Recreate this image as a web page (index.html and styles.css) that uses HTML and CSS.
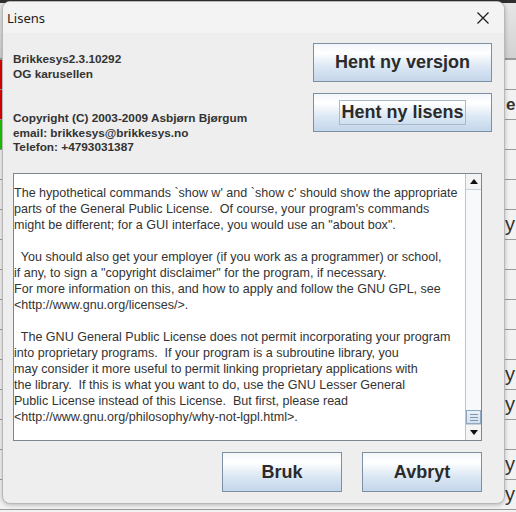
FILE: index.html
```html
<!DOCTYPE html>
<html lang="no">
<head>
    <meta charset="UTF-8">
    <title>Lisens</title>
    <link rel="stylesheet" href="styles.css">
</head>
<body>
    <div class="desk">
        <div class="backdrop">
            <div class="topbar"></div>
            <div class="toolbar"><span class="tool-text">em</span></div>
            <div class="row red"><span></span></div>
            <div class="row red"><span></span></div>
            <div class="row green"><span></span></div>
            <div class="row"><span></span></div>
            <div class="row"><span></span></div>
            <div class="row"><span>y</span></div>
            <div class="row"><span></span></div>
            <div class="row"><span></span></div>
            <div class="row"><span></span></div>
            <div class="row"><span></span></div>
            <div class="row"><span>y</span></div>
            <div class="row"><span>y</span></div>
            <div class="row"><span></span></div>
            <div class="row"><span>y</span></div>
            <div class="row"><span>y</span></div>
        </div>

        <div class="dialog">
            <div class="titlebar">
                <span class="title">Lisens</span>
                <svg class="close" width="12" height="12" viewBox="0 0 12 12">
                    <path d="M0.5 0.5 L11.5 11.5 M11.5 0.5 L0.5 11.5" stroke="#1a1a1a" stroke-width="1.2" fill="none"/>
                </svg>
            </div>

            <div class="content">
                <div class="top">
                    <div class="info">
                        <p>Brikkesys2.3.10292<br>OG karusellen</p>
                        <p>Copyright (C) 2003-2009 Asbjørn Bjørgum<br>email: brikkesys@brikkesys.no<br>Telefon: +4793031387</p>
                    </div>
                    <div class="actions">
                        <button class="jbtn big">Hent ny versjon</button>
                        <button class="jbtn big"><span class="focus">Hent ny lisens</span></button>
                    </div>
                </div>

                <div class="licence">
                    <div class="text">The hypothetical commands `show w' and `show c' should show the appropriate
parts of the General Public License.  Of course, your program's commands
might be different; for a GUI interface, you would use an "about box".

  You should also get your employer (if you work as a programmer) or school,
if any, to sign a "copyright disclaimer" for the program, if necessary.
For more information on this, and how to apply and follow the GNU GPL, see
&lt;http://www.gnu.org/licenses/&gt;.

  The GNU General Public License does not permit incorporating your program
into proprietary programs.  If your program is a subroutine library, you
may consider it more useful to permit linking proprietary applications with
the library.  If this is what you want to do, use the GNU Lesser General
Public License instead of this License.  But first, please read
&lt;http://www.gnu.org/philosophy/why-not-lgpl.html&gt;.</div>
                    <div class="scrollbar">
                        <div class="arrow"><svg width="8" height="5" viewBox="0 0 8 5"><path d="M4 0 L8 5 L0 5 Z" fill="#111"/></svg></div>
                        <div class="track"></div>
                        <div class="thumb"><i></i><i></i><i></i></div>
                        <div class="arrow"><svg width="8" height="5" viewBox="0 0 8 5"><path d="M0 0 L8 0 L4 5 Z" fill="#111"/></svg></div>
                    </div>
                </div>

                <div class="footer">
                    <button class="jbtn small">Bruk</button>
                    <button class="jbtn small">Avbryt</button>
                </div>
            </div>
        </div>
    </div>
</body>
</html>
```

FILE: styles.css
```css
* {
    margin: 0;
    padding: 0;
    box-sizing: border-box;
}

body {
    width: 516px;
    height: 512px;
    overflow: hidden;
    background-color: #eaeaea;
    font-family: "Liberation Sans", Arial, sans-serif;
}

.desk {
    position: relative;
    width: 516px;
    height: 512px;
}

/* the main window behind the dialog */
.backdrop {
    display: flex;
    flex-direction: column;
    height: 100%;
    background-color: #f2f2f2;
}

.topbar {
    height: 3px;
    background-color: #2e2e2e;
}

.toolbar {
    height: 57px;
    background: linear-gradient(#e6e6e6, #d2d2d2);
    border-bottom: 2px solid #9a9a9a;
    position: relative;
}

.tool-text {
    position: absolute;
    left: 506px;
    top: 92px;
    font-size: 17px;
    font-weight: bold;
    color: #333;
}

.row {
    height: 30px;
    flex-shrink: 0;
    border-bottom: 1px solid #9a9a9a;
    display: flex;
    justify-content: flex-end;
    align-items: center;
    padding-right: 1px;
    font-size: 20px;
    color: #333;
}

.row.red {
    background: linear-gradient(to right, #e00000 0 3px, transparent 3px);
}

.row.green {
    background: linear-gradient(to right, #19c800 0 3px, transparent 3px);
}

/* dialog window */
.dialog {
    position: absolute;
    left: 2px;
    top: 1px;
    width: 503px;
    height: 503px;
    border: 1px solid #b8b8b8;
    border-radius: 8px;
    background-color: #eeeeee;
    overflow: hidden;
    display: flex;
    flex-direction: column;
    box-shadow: 0 1px 4px rgba(0, 0, 0, 0.25);
}

.titlebar {
    height: 31px;
    background-color: #f3f3f3;
    display: flex;
    align-items: center;
    justify-content: space-between;
    padding: 0 15px 0 4px;
}

.title {
    font-family: "Noto Sans", "Open Sans", sans-serif;
    font-size: 13px;
    color: #1c1c1c;
}

.content {
    flex: 1;
    padding: 10px 0 0 10px;
    display: flex;
    flex-direction: column;
}

.top {
    display: flex;
    justify-content: space-between;
    padding-right: 12px;
    height: 130px;
}

.info {
    padding-top: 9px;
    font-size: 11.8px;
    font-weight: bold;
    line-height: 14.5px;
    color: #333;
}

.info p {
    margin-bottom: 30px;
}

.actions {
    display: flex;
    flex-direction: column;
    gap: 11px;
}

.jbtn {
    font-family: "Liberation Sans", Arial, sans-serif;
    font-weight: bold;
    color: #2b2b2b;
    border: 1px solid #7d8fa3;
    background: linear-gradient(#f3f7fb, #ffffff 25%, #dce8f4 60%, #c4d6ea);
    display: flex;
    align-items: center;
    justify-content: center;
}

.big {
    width: 179px;
    height: 39px;
    font-size: 18px;
}

.small {
    width: 120px;
    height: 40px;
    font-size: 18px;
}

.focus {
    border: 1px solid #a6bacd;
    padding: 1px 1px 1px 1px;
}

.licence {
    margin-top: 0;
    width: 469px;
    height: 268px;
    border: 1px solid #7d8792;
    background-color: #ffffff;
    display: flex;
}

.text {
    flex: 1;
    padding: 11px 0 0 0;
    white-space: pre;
    font-size: 12.55px;
    line-height: 16px;
    color: #333;
    overflow: hidden;
}

.scrollbar {
    width: 16px;
    display: flex;
    flex-direction: column;
    border-left: 1px solid #b7c6d6;
    background-color: #f7f9fb;
}

.arrow {
    height: 16px;
    display: flex;
    align-items: center;
    justify-content: center;
    background-color: #f4f4f4;
    border-bottom: 1px solid #c8d2dc;
}

.arrow:last-child {
    border-bottom: none;
    border-top: 1px solid #c8d2dc;
}

.track {
    flex: 1;
}

.thumb {
    height: 14px;
    border: 1px solid #8ea7c2;
    background: linear-gradient(#e9f0f8, #d3e0ee);
    display: flex;
    flex-direction: column;
    justify-content: center;
    align-items: center;
    gap: 2px;
}

.thumb i {
    display: block;
    width: 8px;
    height: 1px;
    background-color: #7f97b2;
}

.footer {
    display: flex;
    justify-content: flex-end;
    gap: 20px;
    padding-right: 22px;
    margin-top: 11px;
}
```
